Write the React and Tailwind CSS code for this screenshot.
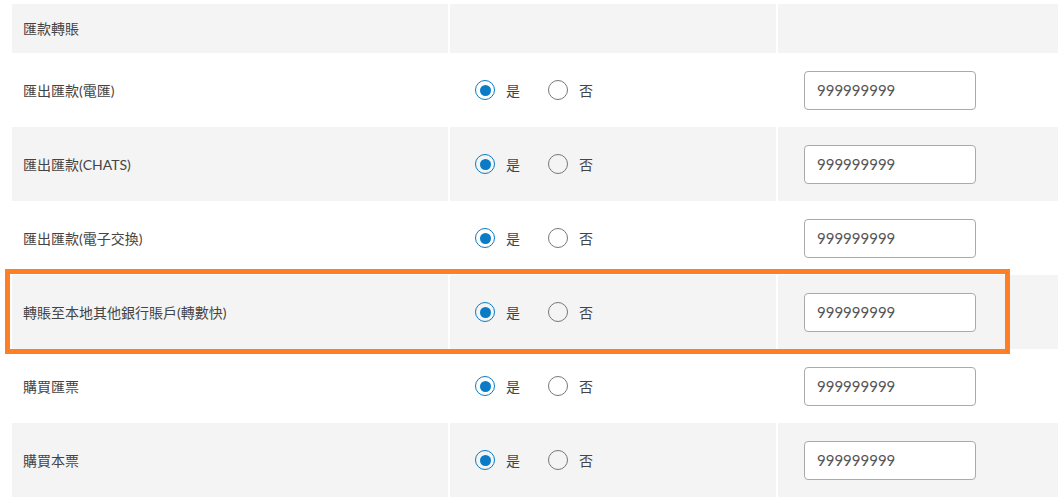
const rows = [
  { label: "匯出匯款(電匯)", value: "999999999" },
  { label: "匯出匯款(CHATS)", value: "999999999" },
  { label: "匯出匯款(電子交換)", value: "999999999" },
  { label: "轉賬至本地其他銀行賬戶(轉數快)", value: "999999999" },
  { label: "購買匯票", value: "999999999" },
  { label: "購買本票", value: "999999999" },
];

const font = "font-['Lato','Noto_Sans_CJK_TC',sans-serif]";

function Radio({ checked, label }) {
  return (
    <label className="flex items-center">
      {checked ? (
        <span className="w-[20px] h-[20px] rounded-full border-[1.5px] border-[#0a7bc4] flex items-center justify-center">
          <span className="w-[11px] h-[11px] rounded-full bg-[#0a7bc4]" />
        </span>
      ) : (
        <span className="w-[20px] h-[20px] rounded-full border-[1.5px] border-[#777]" />
      )}
      <span className="ml-[11px] text-[14px] text-[#444]">{label}</span>
    </label>
  );
}

export default function App() {
  return (
    <div className={`relative w-[1058px] h-[502px] bg-white overflow-hidden pt-[4px] pl-[12px] ${font}`}>
      {/* header */}
      <div className="grid grid-cols-[436px_326px_280px] gap-x-[2px] h-[49px]">
        <div className="bg-[#f4f4f4] flex items-center pl-[11px] text-[14px] text-[#444]">匯款轉賬</div>
        <div className="bg-[#f4f4f4]" />
        <div className="bg-[#f4f4f4]" />
      </div>

      {rows.map((r, i) => {
        const bg = i % 2 === 1 ? "bg-[#f4f4f4]" : "bg-white";
        return (
          <div key={i} className="grid grid-cols-[436px_326px_280px] gap-x-[2px] h-[74px]">
            <div className={`${bg} flex items-center pl-[11px] text-[14px] text-[#444]`}>{r.label}</div>
            <div className={`${bg} flex items-center pl-[25px] gap-[28px]`}>
              <Radio checked label="是" />
              <Radio label="否" />
            </div>
            <div className={`${bg} flex items-center pl-[26px]`}>
              <div className="w-[172px] h-[39px] bg-white border border-[#aaa] rounded-[4px] flex items-center pl-[12px] text-[15px] text-[#555] font-['Lato',sans-serif]">
                {r.value}
              </div>
            </div>
          </div>
        );
      })}

      {/* highlight */}
      <div className="absolute left-[5px] top-[269px] w-[1005px] h-[85px] border-[5px] border-[#ff7f27] pointer-events-none" />
    </div>
  );
}
